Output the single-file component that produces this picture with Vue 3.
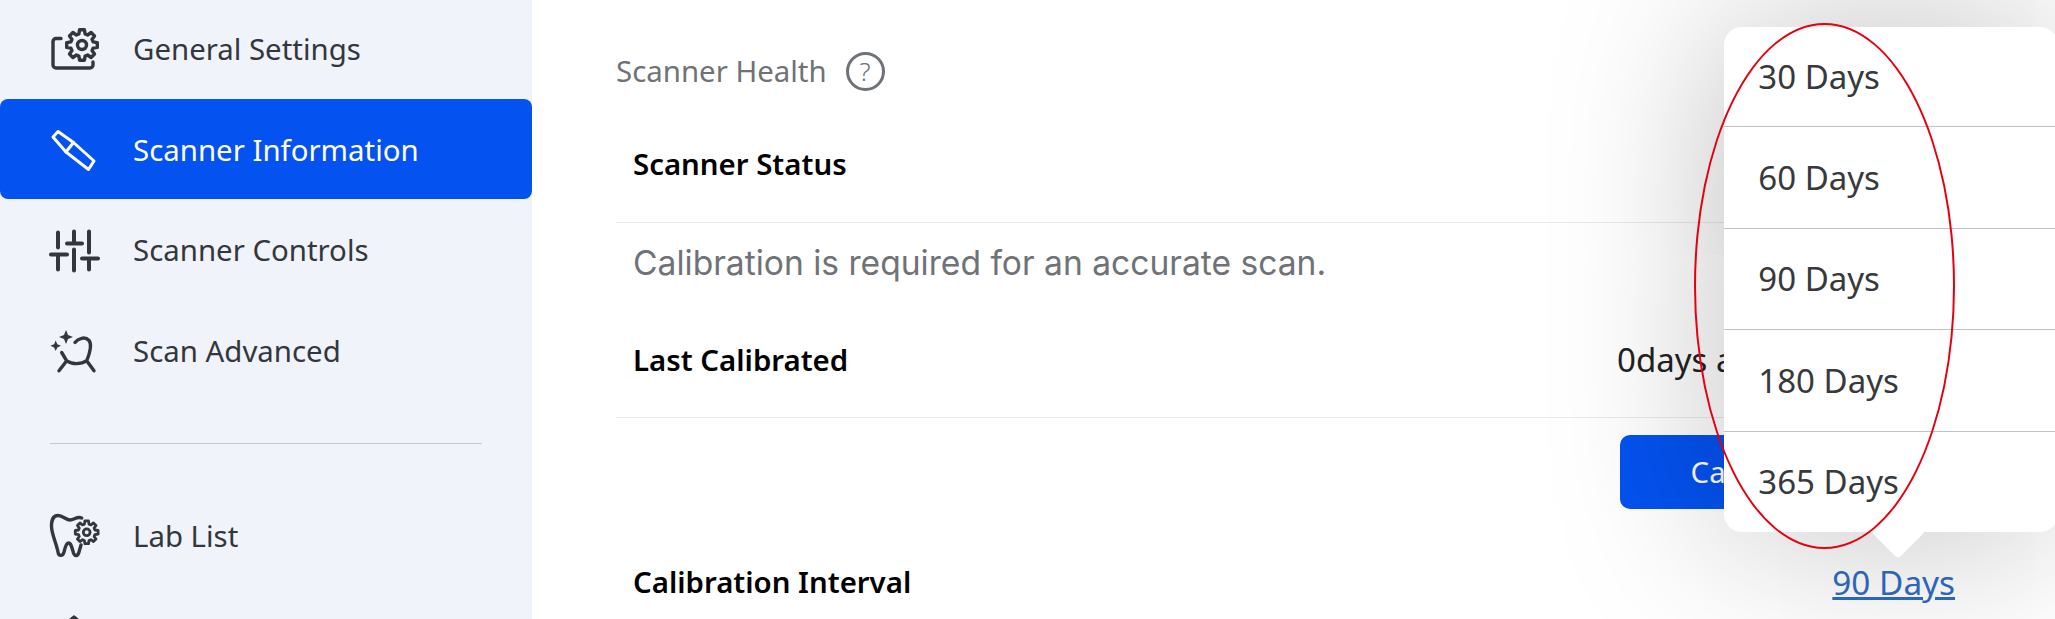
<script setup>
function gearPath(cx, cy, R, r, n) {
  const pts = []
  const step = (Math.PI * 2) / n
  for (let i = 0; i < n; i++) {
    const a = i * step - Math.PI / 2
    const w = step * 0.2
    const c = step * 0.3
    pts.push([cx + R * Math.cos(a - w), cy + R * Math.sin(a - w)])
    pts.push([cx + R * Math.cos(a + w), cy + R * Math.sin(a + w)])
    pts.push([cx + r * Math.cos(a + w + c * 0.5), cy + r * Math.sin(a + w + c * 0.5)])
    pts.push([cx + r * Math.cos(a + step - w - c * 0.5), cy + r * Math.sin(a + step - w - c * 0.5)])
  }
  return 'M' + pts.map((p) => p[0].toFixed(1) + ' ' + p[1].toFixed(1)).join('L') + 'Z'
}
const bigGear = gearPath(32, 18, 15.5, 11.5, 8)
const smallGear = gearPath(36.7, 18.3, 11.5, 8.5, 8)

const navTop = [
  { label: 'General Settings', icon: 'gear' },
  { label: 'Scanner Information', icon: 'pen', active: true },
  { label: 'Scanner Controls', icon: 'sliders' },
  { label: 'Scan Advanced', icon: 'spark' },
]
const options = ['30 Days', '60 Days', '90 Days', '180 Days', '365 Days']
</script>

<template>
  <div class="page">
    <aside class="sidebar">
      <a v-for="item in navTop" :key="item.label" class="nav-item" :class="{ active: item.active }">
        <svg class="nav-icon" viewBox="0 0 50 44" fill="none" stroke="currentColor" stroke-width="3.4" stroke-linecap="round" stroke-linejoin="round">
          <template v-if="item.icon === 'gear'">
            <path d="M11 11.500H6a3 3 0 0 0-3 3V38a3 3 0 0 0 3 3H40a3 3 0 0 0 3-3v-3" />
            <path :d="bigGear" />
            <circle cx="32" cy="18" r="4.500" />
          </template>
          <template v-else-if="item.icon === 'pen'">
            <path d="M8 3.500L23.500 14.500L44 33L38.500 41.500L16 24L3 9Z" stroke-width="3" />
            <path d="M23.500 14.500L16 24" stroke-width="3" />
          </template>
          <template v-else-if="item.icon === 'sliders'">
            <path d="M8 4.500V19.500M1 26.500H17M8 26.500V41.500M24 3.500V15.500M17 15.500H32M24 21.500V42.500M39 3.500V24.500M32 30.500H48M39 30.500V41.500" stroke-width="4" />
          </template>
          <template v-else-if="item.icon === 'spark'">
            <path d="M16 1L18 6 23 8 18 10 16 15 14 10 9 8 14 6ZM5.700 11.500L7.300 15.200 11 16.800 7.300 18.400 5.700 22.100 4.100 18.400 .4 16.800 4.100 15.200Z" fill="currentColor" stroke="none" />
            <path d="M25 13.500C28 9.500 35 7 39 11.500C42 15 41 21 36.700 31.800C31 35.500 22 35.500 16.700 31.800L11.700 23.500M16.700 31.800L9 41.800M36.700 31.800L44 41.800" stroke-width="3.400" />
          </template>
        </svg>
        <span>{{ item.label }}</span>
      </a>
      <hr class="nav-divider" />
      <a class="nav-item">
        <svg class="nav-icon" viewBox="0 0 50 44" fill="none" stroke="currentColor" stroke-width="3.4" stroke-linecap="round" stroke-linejoin="round">
          <path d="M31.700 4C27 2 24 6 20 6C16 6 13 1.500 8 1.500C3 1.500 1.500 7 1.500 12C1.500 20 6 28 8 38C8.500 42 12.500 43 14 38C15 34 16 29 18.500 29C21 29 22 34 23.500 39C25 43 28 42 29 38L31 31" />
          <path :d="smallGear" stroke-width="2.800" />
          <circle cx="36.700" cy="18.300" r="3.400" stroke-width="2.800" />
        </svg>
        <span>Lab List</span>
      </a>
      <a class="nav-item">
        <svg class="nav-icon" viewBox="0 0 50 44" fill="currentColor" stroke="currentColor" stroke-width="3.2" stroke-linejoin="round">
          <path d="M24 2L36 12H12Z" />
        </svg>
      </a>
    </aside>

    <main class="content">
      <h2 class="section-title">
        Scanner Health
        <span class="help">?</span>
      </h2>
      <div class="row bordered status"><strong>Scanner Status</strong></div>
      <p class="note">Calibration is required for an accurate scan.</p>
      <div class="row bordered last">
        <strong>Last Calibrated</strong>
        <span class="value">0days ago</span>
      </div>
      <div class="actions"><button class="primary">Calibrate Now</button></div>
      <div class="row interval">
        <strong>Calibration Interval</strong>
        <span class="link-wrap">
          <a class="link">90 Days</a>
          <div class="popover">
            <div v-for="o in options" :key="o" class="option">{{ o }}</div>
          </div>
          <div class="ellipse"></div>
        </span>
      </div>
    </main>
  </div>
</template>

<style>
html, body { margin: 0; padding: 0; background: #fff; overflow: hidden; }
</style>

<style scoped>
.page {
  display: flex;
  width: 2055px;
  height: 619px;
  overflow: hidden;
  font-family: "Noto Sans", "Open Sans", sans-serif;
  background: #fff;
}
.sidebar {
  width: 532px;
  flex: none;
  background: #f0f3f9;
  display: flex;
  flex-direction: column;
  margin-top: -2px;
}
.nav-item {
  flex: none;
  height: 101px;
  display: flex;
  align-items: center;
  padding-left: 50px;
  gap: 33px;
  font-size: 29.4px;
  color: #33373d;
}
.nav-item.active {
  height: 100px;
  padding-top: 1px;
  box-sizing: border-box;
  background: #0452f0;
  color: #fff;
  border-radius: 8px;
}
.nav-icon { width: 50px; height: 44px; flex: none; overflow: visible; }
.nav-divider {
  flex: none;
  border: 0;
  border-top: 1.500px solid #c5c8cd;
  margin: 42px 50px 41px;
}
.content {
  flex: 1;
  padding: 50px 100px 0 84px;
  min-width: 0;
  display: flex;
  flex-direction: column;
}
.content > * { flex: none; }
.section-title {
  margin: 0;
  font-size: 29.4px;
  font-weight: 400;
  color: #6f7276;
  height: 42px;
  display: flex;
  align-items: center;
  gap: 19px;
}
.help {
  width: 33px;
  height: 33px;
  border: 3px solid #6f7276;
  border-radius: 50%;
  display: flex;
  align-items: center;
  justify-content: center;
  font-size: 26px;
  font-weight: 300;
}
.row {
  display: flex;
  align-items: center;
  justify-content: space-between;
  padding: 0 0 0 17px;
  font-size: 29.4px;
  color: #000;
}
.row strong { font-weight: 600; }
.bordered { border-bottom: 1.500px solid #e9eaec; }
.status { height: 131px; padding-top: 14px; box-sizing: border-box; }
.note {
  margin: 0;
  padding: 0 0 0 17px;
  height: 79px;
  display: flex;
  align-items: center;
  font-family: Inter, "Noto Sans", sans-serif;
  font-size: 33.6px;
  color: #6f7276;
}
.last { height: 116px; box-sizing: border-box; }
.value { width: 338px; font-size: 33px; color: #222; }
.actions {
  display: flex;
  justify-content: flex-end;
  padding-top: 17px;
}
.primary {
  width: 335px;
  height: 74px;
  background: #0452f0;
  border: 0;
  border-radius: 10px;
  color: #fff;
  font: inherit;
  font-size: 29.4px;
}
.interval { height: 146px; }
.link-wrap { position: relative; display: block; }
.link { font-size: 33.3px; color: #2f6cc6; text-decoration: underline; }
.popover {
  position: absolute;
  left: -108px;
  bottom: 73.500px;
  width: 334px;
  background: #fff;
  border-radius: 18px;
  box-shadow: 0 0 170px rgba(0, 0, 0, .27);
  color: #38393b;
  font-size: 33px;
  font-weight: 400;
}
.popover::after {
  content: "";
  position: absolute;
  left: 155px;
  bottom: -19px;
  width: 38px;
  height: 38px;
  background: #fff;
  transform: rotate(45deg);
  border-radius: 4px;
}
.option {
  height: 101.700px;
  display: flex;
  align-items: center;
  padding-left: 34px;
  box-sizing: border-box;
  border-bottom: 1.500px solid #c2c2c4;
}
.option:first-child { height: 99.500px; }
.option:last-child { border-bottom: 0; height: 99.500px; }
.ellipse {
  position: absolute;
  left: -138px;
  top: -536px;
  width: 261px;
  height: 526px;
  border: 2.500px solid #e6000f;
  border-radius: 50%;
  box-sizing: border-box;
  pointer-events: none;
  z-index: 2;
}
</style>
